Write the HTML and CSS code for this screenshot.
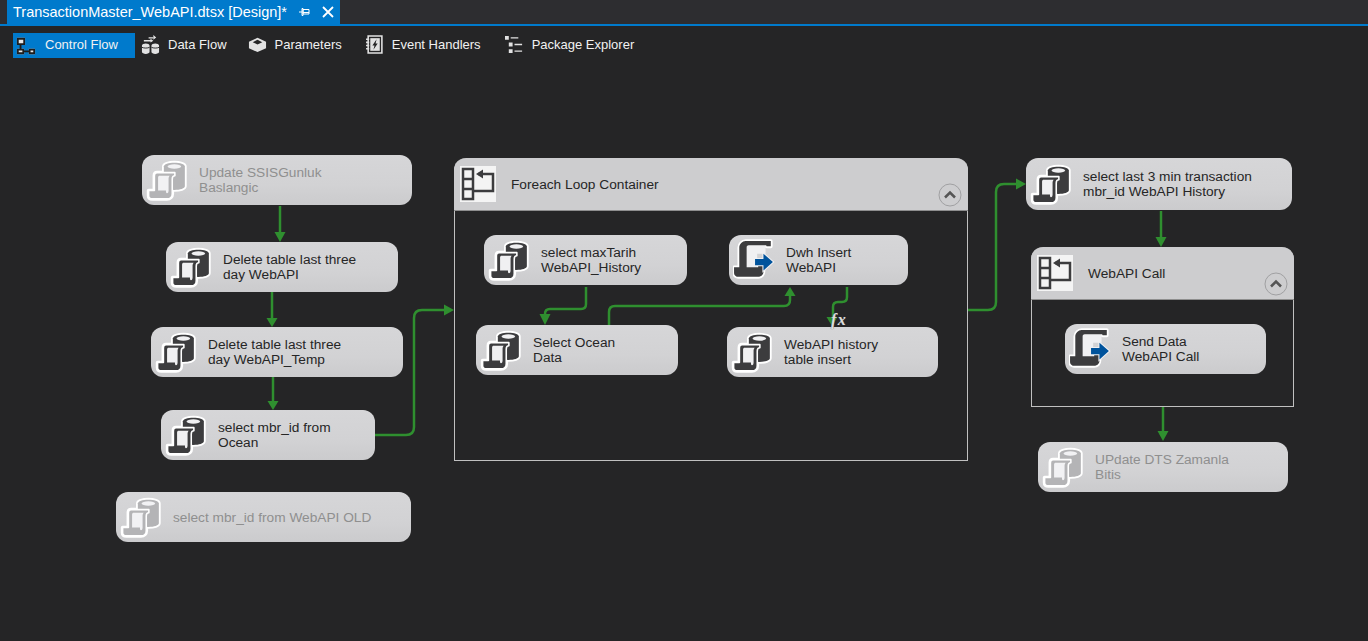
FILE: index.html
```html
<!DOCTYPE html>
<html lang="en">
<head>
    <meta charset="UTF-8">
    <title>TransactionMaster_WebAPI.dtsx [Design]*</title>
    <link rel="stylesheet" href="styles.css">
</head>
<body>
    <svg class="defs" width="0" height="0">
        <defs>
            <!-- SQL task: cylinder behind a scroll -->
            <symbol id="sql" viewBox="0 0 40 40">
                <g class="halo">
                    <path d="M17 7c0-2 4.500-3.500 10-3.500S37 5 37 7v19c0 2-4.500 3.500-10 3.500S17 28 17 26z"/>
                    <path d="M10.500 13h17v3c-1.500 0-2.500 1-2.500 3v14c0 3-2 5-5 5H6c-2 0-3.500-1-3.500-3v-5H8V16c0-2 1-3 2.500-3z"/>
                </g>
                <path class="ink" d="M17 7c0-2 4.500-3.500 10-3.500S37 5 37 7v19c0 2-4.500 3.500-10 3.500S17 28 17 26z"/>
                <ellipse class="paper" cx="27" cy="7.200" rx="6.500" ry="2.100"/>
                <path class="halo-thin" d="M10.500 13h17v3c-1.500 0-2.500 1-2.500 3v14c0 3-2 5-5 5H6c-2 0-3.500-1-3.500-3v-5H8V16c0-2 1-3 2.500-3z"/>
                <path class="paper" d="M13 16h9.500c-.7 .7-1 2-1 3v11c0 1.500-.5 2.500-1.500 2.500-.8 0-1-.8-1-2.500H11.500V17.500c0-1 .7-1.500 1.500-1.500z"/>
            </symbol>
            <!-- Data flow task: scroll with a blue arrow -->
            <symbol id="dft" viewBox="0 0 40 40">
                <path class="halo" d="M12 2h24v5h-4c0-.5-.5-1-1-1H15c-1.500 0-2 1-2 2v19h11v-3h5v7c0 3-2 5-5 5H5c-2 0-4-1.500-4-3.500V27h5V8c0-3 3-6 6-6z"/>
                <path class="paper" d="M13 8c0-1 1-2 2-2h16v8h-8v13H13z"/>
                <path class="ink" d="M12 2h24v5h-4c0-.5-.5-1-1-1H15c-1.500 0-2 1-2 2v19h11v-3h5v7c0 3-2 5-5 5H5c-2 0-4-1.500-4-3.500V27h5V8c0-3 3-6 6-6z"/>
                <path class="arrow-halo" d="M29 14l9 8-9 8v-5h-8v-6h8z"/>
                <path class="arrow" d="M29 14l9 8-9 8v-5h-8v-6h8z"/>
            </symbol>
            <!-- Container icon -->
            <symbol id="loop" viewBox="0 0 36 36">
                <rect class="white" x="0" y="0" width="36" height="36"/>
                <path class="outline" d="M3 3h10v30H3zM3 13h10M3 23h10M18 8h15v17H13"/>
                <path class="ink" d="M23 3.500v9l-7-4.500z"/>
            </symbol>
            <symbol id="chevron" viewBox="0 0 24 24">
                <circle class="ring" cx="12" cy="12" r="11"/>
                <path class="chev" d="M7 14.500l5-5 5 5"/>
            </symbol>
        </defs>
    </svg>

    <!-- document tab -->
    <div class="tabstrip">
        <div class="tab">
            <span class="tab-title">TransactionMaster_WebAPI.dtsx [Design]*</span>
            <svg class="tab-pin" viewBox="0 0 12 10"><path d="M0 5h3M3 1.500h1v7H3zM4 2.500h6v4.500H4zM4 5.500h6"/></svg>
            <svg class="tab-close" viewBox="0 0 12 12"><path d="M1 1l10 10M11 1L1 11"/></svg>
        </div>
    </div>

    <!-- designer tabs -->
    <div class="toolbar">
        <div class="tool active">
            <svg class="tool-icon" viewBox="0 0 22 20"><path class="tool-dark-fill" d="M1 1h9v8H1zM1 13h8v6H1zM14 13h7v6h-7z"/><path class="tool-dark" d="M2 2h7v6H2zM2 14h6v4H2zM15 14h5v4h-5zM5 9v4M9 16h5"/></svg>
            <span>Control Flow</span>
        </div>
        <div class="tool">
            <svg class="tool-icon" viewBox="0 0 20 20"><path class="tool-fill" d="M1 11c0-1 2-2 4-2s4 1 4 2v7c0 1-2 2-4 2s-4-1-4-2zM11 11c0-1 2-2 4-2s4 1 4 2v7c0 1-2 2-4 2s-4-1-4-2z"/><path class="tool-line" d="M3 6h8M8 3h5"/><path class="tool-fill" d="M13 0v5l3-2.500zM10 4v4l3-2z"/><path class="tool-gap" d="M1 13c2 1 6 1 8 0M11 13c2 1 6 1 8 0"/></svg>
            <span>Data Flow</span>
        </div>
        <div class="tool">
            <svg class="tool-icon" viewBox="0 0 20 20"><path class="tool-fill" d="M10 3l9 4v7l-9 4-9-4V7z"/><path class="tool-hole" d="M10 5l5 2.500-5 2.500-5-2.500z"/></svg>
            <span>Parameters</span>
        </div>
        <div class="tool tool-events">
            <svg class="tool-icon" viewBox="0 0 18 18"><path class="tool-line" d="M3 1h13v16H3zM1 4h3M1 7h3M1 10h3M1 13h3"/><path class="tool-fill" d="M5 3h9v12H5z"/><path class="tool-hole" d="M11 4L7 10h2l-1 4 4-6h-2z"/></svg>
            <span>Event Handlers</span>
        </div>
        <div class="tool tool-pkg">
            <svg class="tool-icon" viewBox="0 0 20 20"><path class="tool-fill" d="M0 1h4v4H0zM4 8h4v4H4zM4 15h4v4H4z"/><path class="tool-line" d="M6 3h8M10 10h8M10 17h8"/></svg>
            <span>Package Explorer</span>
        </div>
    </div>

    <!-- design surface -->
    <div class="canvas">
        <div class="node off n-update"><svg class="node-icon"><use href="#sql"/></svg><p>Update SSISGunluk<br>Baslangic</p></div>
        <div class="node n-delete"><svg class="node-icon"><use href="#sql"/></svg><p>Delete table last three<br>day WebAPI</p></div>
        <div class="node n-temp"><svg class="node-icon"><use href="#sql"/></svg><p>Delete table last three<br>day WebAPI_Temp</p></div>
        <div class="node n-mbr"><svg class="node-icon"><use href="#sql"/></svg><p>select mbr_id from<br>Ocean</p></div>
        <div class="node off n-old"><svg class="node-icon"><use href="#sql"/></svg><p>select mbr_id from WebAPI OLD</p></div>

        <div class="box n-foreach">
            <div class="box-head">
                <svg class="box-icon"><use href="#loop"/></svg>
                <span>Foreach Loop Container</span>
                <svg class="box-toggle"><use href="#chevron"/></svg>
            </div>
            <div class="box-body">
                <div class="node n-max"><svg class="node-icon"><use href="#sql"/></svg><p>select maxTarih<br>WebAPI_History</p></div>
                <div class="node n-dwh"><svg class="node-icon"><use href="#dft"/></svg><p>Dwh Insert<br>WebAPI</p></div>
                <div class="node n-ocean"><svg class="node-icon"><use href="#sql"/></svg><p>Select Ocean<br>Data</p></div>
                <div class="node n-hist"><svg class="node-icon"><use href="#sql"/></svg><p>WebAPI history<br>table insert</p></div>
            </div>
        </div>

        <div class="node tall n-last"><svg class="node-icon"><use href="#sql"/></svg><p>select last 3 min transaction<br>mbr_id WebAPI History</p></div>

        <div class="box n-call">
            <div class="box-head">
                <svg class="box-icon"><use href="#loop"/></svg>
                <span>WebAPI Call</span>
                <svg class="box-toggle"><use href="#chevron"/></svg>
            </div>
            <div class="box-body">
                <div class="node n-send"><svg class="node-icon"><use href="#dft"/></svg><p>Send Data<br>WebAPI Call</p></div>
            </div>
        </div>

        <div class="node off n-dts"><svg class="node-icon"><use href="#sql"/></svg><p>UPdate DTS Zamanla<br>Bitis</p></div>

        <!-- precedence constraints, canvas coordinates -->
        <svg class="links" viewBox="0 0 1368 581">
            <path d="M280 146v28"/>
            <path d="M272 232v28"/>
            <path d="M273 317v26"/>
            <path d="M375 375h31q8 0 8-8v-109q0-8 8-8h24"/>
            <path d="M586 227v17q0 5-5 5h-31q-5 0-5 5v2"/>
            <path d="M609 265v-13q0-6 6-6h169q6 0 6-6v-6"/>
            <path d="M847 227v10q0 5-5 5h-4q-5 0-5 5v12"/>
            <path d="M968 250h20q8 0 8-8v-110q0-8 8-8h14"/>
            <path d="M1161 151v28"/>
            <path d="M1163 347v26"/>
            <g class="heads">
                <path d="M274.500 172h11l-5.500 10z"/>
                <path d="M266.500 258h11l-5.500 9z"/>
                <path d="M267.500 341h11l-5.500 9z"/>
                <path d="M444 244.500v11l10-5.500z"/>
                <path d="M539.500 254h11l-5.500 11z"/>
                <path d="M784.500 236h11l-5.500-9z"/>
                <path d="M826.500 257h11l-5.500 9z"/>
                <path d="M1016 118.500v11l10-5.500z"/>
                <path d="M1155.500 177h11l-5.500 10z"/>
                <path d="M1157.500 371h11l-5.500 10z"/>
            </g>
        </svg>
        <span class="fx">fx</span>
    </div>
</body>
</html>
```

FILE: styles.css
```css
html, body {
    margin: 0;
    padding: 0;
    height: 100%;
}

body {
    display: flex;
    flex-direction: column;
    overflow: hidden;
    background-color: #252526;
    font-family: "Liberation Sans", Arial, sans-serif;
}

.defs {
    position: absolute;
}

/* tab strip */
.tabstrip {
    height: 24px;
    padding-left: 7px;
    border-bottom: 2px solid #007acc;
    background-color: #2d2d30;
    flex: none;
}

.tab {
    display: flex;
    align-items: center;
    width: 333px;
    height: 24px;
    padding-left: 6px;
    box-sizing: border-box;
    background-color: #007acc;
    color: #fff;
    font-size: 14.5px;
}

.tab-title {
    flex: 1;
    white-space: nowrap;
}

.tab-pin {
    width: 12px;
    height: 10px;
    margin-right: 11px;
    fill: none;
    stroke: #fff;
}

.tab-close {
    width: 12px;
    height: 12px;
    margin-right: 6px;
    fill: none;
    stroke: #fff;
    stroke-width: 1.8;
}

/* designer tabs */
.toolbar {
    display: flex;
    align-items: flex-start;
    height: 34px;
    padding: 7px 0 0 13px;
    box-sizing: border-box;
    flex: none;
    color: #f1f1f1;
    font-size: 13px;
}

.tool {
    display: flex;
    align-items: center;
    gap: 8px;
    height: 25px;
    padding-bottom: 3px;
    box-sizing: border-box;
    margin-right: 21px;
    white-space: nowrap;
}

.tool.active {
    width: 122px;
    padding-left: 3px;
    margin-right: 6px;
    background-color: #007acc;
    gap: 9px;
}

.tool-events {
    margin-left: 2px;
}

.tool-pkg {
    margin-left: 3px;
}

.tool-icon {
    width: 19px;
    height: 19px;
    flex: none;
}

.active .tool-icon {
    width: 20px;
    height: 20px;
    margin-top: 3px;
}

.tool-dark {
    fill: none;
    stroke: #1e1e1e;
    stroke-width: 2;
}

.tool-dark-fill {
    fill: #e8e8e8;
}

.tool-fill {
    fill: #e2e2e2;
}

.tool-hole {
    fill: #252526;
}

.tool-gap {
    fill: none;
    stroke: #252526;
}

.tool-line {
    fill: none;
    stroke: #e2e2e2;
    stroke-width: 1.5;
}

/* design surface */
.canvas {
    position: relative;
    flex: 1;
    background-color: #252526;
    --ink: #3c3c3e;
    --paper: #f0f0f2;
}

.node {
    position: absolute;
    display: flex;
    align-items: center;
    height: 50px;
    box-sizing: border-box;
    padding-left: 4px;
    border-radius: 12px;
    background: linear-gradient(#d6d6d8, #d2d2d4 60%, #cbcbcd);
    color: #262626;
    font-size: 13.7px;
    line-height: 15px;
}

.node p {
    margin: 0 0 0 11px;
    white-space: nowrap;
}

.node.tall {
    height: 52px;
}

/* disabled tasks: the variables reach the icon through <use> */
.node.off {
    color: #8f8f8f;
    --ink: #b4b4b6;
    --paper: #f2f2f4;
}

.node-icon {
    width: 42px;
    height: 42px;
    flex: none;
}

.halo {
    fill: #fff;
    stroke: #fff;
    stroke-width: 3.500;
    stroke-linejoin: round;
}

.halo-thin {
    fill: var(--ink);
    stroke: #fff;
    stroke-width: 1.500;
    stroke-linejoin: round;
}

.ink {
    fill: var(--ink);
}

.paper {
    fill: var(--paper);
}

.arrow {
    fill: #00539c;
}

.arrow-halo {
    fill: #fff;
    stroke: #f0f0f2;
    stroke-width: 2;
}

.white {
    fill: #f4f4f4;
}

.outline {
    fill: none;
    stroke: #3c3c3e;
    stroke-width: 2.500;
}

.ring {
    fill: none;
    stroke: #a0a0a2;
}

.chev {
    fill: none;
    stroke: #555;
    stroke-width: 2.500;
}

/* containers */
.box {
    position: absolute;
    display: flex;
    flex-direction: column;
    box-sizing: border-box;
    border: 1px solid #c0c0c0;
    border-top: none;
    border-radius: 12px 12px 0 0;
}

.box-head {
    position: relative;
    display: flex;
    align-items: center;
    height: 53px;
    flex: none;
    margin: 0 -1px;
    border-radius: 12px 12px 0 0;
    border-bottom: 1px solid #8e8e8e;
    box-sizing: border-box;
    background-color: #cdcdcf;
    color: #262626;
    font-size: 13.7px;
}

.box-icon {
    width: 36px;
    height: 36px;
    margin: 0 15px 0 6px;
    flex: none;
}

.box-toggle {
    position: absolute;
    right: 6px;
    bottom: 3px;
    width: 24px;
    height: 24px;
}

.box-body {
    position: relative;
    flex: 1;
}

.links {
    position: absolute;
    left: 0;
    top: 0;
    width: 1368px;
    height: 581px;
    fill: none;
    stroke: #2f8f2f;
    stroke-width: 2.500;
    pointer-events: none;
}

.heads {
    fill: #2f8f2f;
    stroke: none;
}

.fx {
    position: absolute;
    left: 831px;
    top: 252px;
    color: #dcdcdc;
    font-family: "Liberation Serif", serif;
    font-style: italic;
    font-weight: bold;
    font-size: 16px;
    line-height: 16px;
    letter-spacing: 1.500px;
    text-shadow: 0 0 1px #555;
}

/* task places on the surface */
.n-update { left: 142px; top: 95px; width: 270px; }
.n-delete { left: 166px; top: 182px; width: 232px; }
.n-temp { left: 151px; top: 267px; width: 252px; }
.n-mbr { left: 161px; top: 350px; width: 214px; }
.n-old { left: 116px; top: 432px; width: 295px; }
.n-foreach { left: 454px; top: 98px; width: 514px; height: 303px; }
.n-last { left: 1026px; top: 98px; width: 266px; }
.n-call { left: 1031px; top: 187px; width: 263px; height: 160px; }
.n-dts { left: 1038px; top: 382px; width: 250px; }

/* relative to the container body */
.n-max { left: 29px; top: 24px; width: 203px; }
.n-dwh { left: 274px; top: 24px; width: 179px; }
.n-ocean { left: 21px; top: 114px; width: 202px; }
.n-hist { left: 272px; top: 116px; width: 211px; }
.n-send { left: 33px; top: 24px; width: 201px; }
```
